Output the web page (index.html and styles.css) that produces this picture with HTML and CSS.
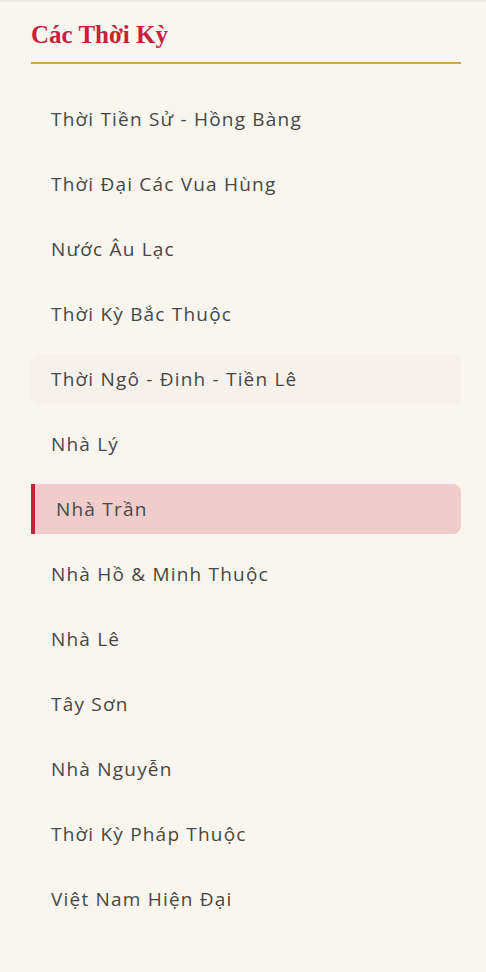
FILE: index.html
```html
<!DOCTYPE html>
<html lang="vi">
<head>
<meta charset="utf-8">
<link rel="stylesheet" href="styles.css">
</head>
<body>
<aside class="sidebar">
  <h2 class="sidebar-title">Các Thời Kỳ</h2>
  <ul class="period-list">
    <li class="period">Thời Tiền Sử - Hồng Bàng</li>
    <li class="period">Thời Đại Các Vua Hùng</li>
    <li class="period">Nước Âu Lạc</li>
    <li class="period">Thời Kỳ Bắc Thuộc</li>
    <li class="period period-hover">Thời Ngô - Đinh - Tiền Lê</li>
    <li class="period">Nhà Lý</li>
    <li class="period period-active">Nhà Trần</li>
    <li class="period">Nhà Hồ &amp; Minh Thuộc</li>
    <li class="period">Nhà Lê</li>
    <li class="period">Tây Sơn</li>
    <li class="period">Nhà Nguyễn</li>
    <li class="period">Thời Kỳ Pháp Thuộc</li>
    <li class="period">Việt Nam Hiện Đại</li>
  </ul>
</aside>
</body>
</html>
```

FILE: styles.css
```css
html, body {
  margin: 0;
  padding: 0;
  background: #f9f6ef;
  height: 100%;
}
body {
  box-shadow: inset 0 3px 3px -2px rgba(0,0,0,0.08);
}
.sidebar {
  padding: 20px 25px 0 31px;
}
.sidebar-title {
  margin: 0;
  padding-bottom: 12px;
  font-family: "Liberation Serif", serif;
  font-weight: 700;
  font-size: 25px;
  line-height: 30px;
  color: #c8203c;
  border-bottom: 2px solid #d6a637;
}
.period-list {
  list-style: none;
  margin: 30px 0 0;
  padding: 0;
  display: flex;
  flex-direction: column;
  gap: 15px;
}
.period {
  padding: 14px 20px;
  font-family: "Open Sans", sans-serif;
  font-size: 19px;
  line-height: 22px;
  letter-spacing: 1.2px;
  color: #474747;
  border-radius: 8px;
}
.period-hover {
  background: #f6f1ea;
}
.period-active {
  background: #f0cdca;
  border-left: 4px solid #c8203c;
  border-radius: 0 8px 8px 0;
  padding-left: 21px;
}
```
